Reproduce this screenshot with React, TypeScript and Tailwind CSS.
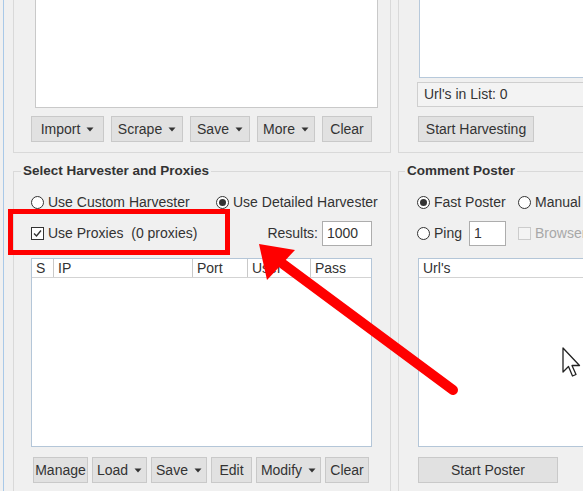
import type { ReactNode } from 'react'

const font = 'font-["Liberation_Sans",Arial,sans-serif]'

function Caret() {
  return (
    <svg width="8" height="5" viewBox="0 0 8 5" className="ml-[6px] shrink-0">
      <path d="M0.5 0.5h7L4 4.5z" fill="#333" />
    </svg>
  )
}

function Btn({ w, children, caret }: { w: number; children: ReactNode; caret?: boolean }) {
  return (
    <div
      className="flex h-[26px] shrink-0 items-center justify-center border border-[#c9c9c9] bg-[#e1e1e1] text-[14px] text-[#333]"
      style={{ width: w }}
    >
      {children}
      {caret ? <Caret /> : null}
    </div>
  )
}

function Radio({ on }: { on?: boolean }) {
  return (
    <span className="flex h-[13px] w-[13px] shrink-0 items-center justify-center rounded-full border border-[#333] bg-white">
      {on ? <span className="h-[7px] w-[7px] rounded-full bg-[#333]" /> : null}
    </span>
  )
}

function Check({ on, disabled }: { on?: boolean; disabled?: boolean }) {
  return (
    <span
      className={
        disabled
          ? 'block h-[13px] w-[13px] shrink-0 border border-[#cccccc] bg-[#f4f4f4]'
          : 'flex h-[13px] w-[13px] shrink-0 items-center justify-center border border-[#333] bg-white'
      }
    >
      {on ? (
        <svg width="11" height="11" viewBox="0 0 11 11">
          <path d="M2 5.5l2.5 2.5L9 2.5" fill="none" stroke="#333" strokeWidth="1.4" />
        </svg>
      ) : null}
    </span>
  )
}

const proxyCols = [
  { label: 'S', w: 22 },
  { label: 'IP', w: 139 },
  { label: 'Port', w: 55 },
  { label: 'User', w: 63 },
  { label: 'Pass', w: 61 },
]

export default function App() {
  return (
    <div className={`relative flex h-[491px] w-[583px] overflow-hidden bg-[#f0f0f0] text-[14px] text-[#333] ${font}`}>
      <div className="ml-[3px] w-px shrink-0 bg-[#a9c9e8]" />

      <div className="flex shrink-0 flex-col pl-[9px]">
        {/* top panels */}
        <div className="flex h-[153px] shrink-0 gap-[7px]">
          <div className="w-[378px] shrink-0 border-x border-b border-[#d9d9d9]">
            <div className="ml-[21px] h-[108px] w-[343px] border-x border-b border-[#c9c9c9] bg-white" />
            <div className="ml-[17px] mt-[8px] flex gap-[7px]">
              <Btn w={73} caret>Import</Btn>
              <Btn w={72} caret>Scrape</Btn>
              <Btn w={60} caret>Save</Btn>
              <Btn w={58} caret>More</Btn>
              <Btn w={50}>Clear</Btn>
            </div>
          </div>

          <div className="w-[210px] shrink-0 border-l border-b border-[#d9d9d9]">
            <div className="ml-[20px] h-[78px] border-l border-b border-[#b7c9db] bg-white" />
            <div className="ml-[18px] mt-[4px] flex h-[25px] items-center border border-[#cfcfcf] bg-[#f3f3f3] pl-[6px]">
              Url's in List: 0
            </div>
            <div className="ml-[19px] mt-[9px]">
              <Btn w={116}>Start Harvesting</Btn>
            </div>
          </div>
        </div>

        {/* bottom panels */}
        <div className="mt-[10px] flex shrink-0 gap-[7px]">
          <fieldset className="w-[378px] shrink-0 border border-[#d9d9d9] p-0 pb-[20px]">
            <legend className="ml-[7px] px-[2px] text-[13.5px] font-bold leading-[16px]">
              Select Harvester and Proxies
            </legend>
            <div className="ml-[17px] mt-[15px] flex h-[16px] items-center">
              <div className="flex w-[185px] items-center gap-[4px]">
                <Radio />
                <span>Use Custom Harvester</span>
              </div>
              <div className="flex items-center gap-[4px]">
                <Radio on />
                <span>Use Detailed Harvester</span>
              </div>
            </div>
            <div className="ml-[17px] mt-[11px] flex h-[25px] w-[341px] items-center">
              <Check on />
              <span className="ml-[4px] whitespace-pre">Use Proxies  (0 proxies)</span>
              <span className="ml-auto">Results:</span>
              <div className="ml-[4px] flex h-[25px] w-[50px] items-center border border-[#adadad] bg-white pl-[4px]">
                1000
              </div>
            </div>
            <div className="ml-[17px] mt-[12px] flex h-[189px] w-[341px] flex-col border border-[#b4c6d8] bg-white">
              <div className="flex h-[19px] border-b border-[#d3d3d3]">
                {proxyCols.map((c, i) => (
                  <div
                    key={c.label}
                    className={
                      i < proxyCols.length - 1
                        ? 'flex items-center border-r border-[#c9c9c9] pl-[4px]'
                        : 'flex flex-1 items-center pl-[4px]'
                    }
                    style={i < proxyCols.length - 1 ? { width: c.w } : undefined}
                  >
                    {c.label}
                  </div>
                ))}
              </div>
            </div>
            <div className="ml-[19px] mt-[10px] flex gap-[4px]">
              <Btn w={55}>Manage</Btn>
              <Btn w={55} caret>Load</Btn>
              <Btn w={56} caret>Save</Btn>
              <Btn w={41}>Edit</Btn>
              <Btn w={65} caret>Modify</Btn>
              <Btn w={44}>Clear</Btn>
            </div>
          </fieldset>

          <fieldset className="w-[210px] shrink-0 border border-[#d9d9d9] p-0 pb-[20px]">
            <legend className="ml-[6px] px-[2px] text-[13.5px] font-bold leading-[16px]">Comment Poster</legend>
            <div className="ml-[18px] mt-[15px] flex h-[16px] items-center">
              <div className="flex w-[101px] items-center gap-[4px]">
                <Radio on />
                <span>Fast Poster</span>
              </div>
              <div className="flex items-center gap-[4px] whitespace-nowrap">
                <Radio />
                <span>Manual</span>
              </div>
            </div>
            <div className="ml-[18px] mt-[11px] flex h-[25px] items-center whitespace-nowrap">
              <Radio />
              <span className="ml-[4px]">Ping</span>
              <div className="ml-[7px] flex h-[25px] w-[37px] shrink-0 items-center border border-[#adadad] bg-white pl-[4px]">
                1
              </div>
              <span className="ml-[12px]">
                <Check disabled />
              </span>
              <span className="ml-[4px] text-[#a8a8a8]">Browser</span>
            </div>
            <div className="ml-[19px] mt-[12px] flex h-[189px] flex-col border border-[#b4c6d8] bg-white">
              <div className="flex h-[19px] items-center border-b border-[#d3d3d3] pl-[4px]">Url's</div>
            </div>
            <div className="ml-[19px] mt-[10px]">
              <Btn w={140}>Start Poster</Btn>
            </div>
          </fieldset>
        </div>
      </div>

      {/* annotation overlay */}
      <div className="pointer-events-none absolute left-[8px] top-[209px] h-[46px] w-[222px] border-[5px] border-[#ff0000]" />
      <svg className="pointer-events-none absolute left-0 top-0" width="583" height="491" viewBox="0 0 583 491">
        <line x1="453" y1="390" x2="283" y2="264" stroke="#ff0000" strokeWidth="10" strokeLinecap="round" />
        <polygon points="259,244 295,250 267,280" fill="#ff0000" />
      </svg>
      <svg className="pointer-events-none absolute left-[562px] top-[347px]" width="20" height="31" viewBox="0 0 20 31">
        <path
          d="M1 1 L1 25 L6.5 19.5 L10.5 29 L14 27.5 L10 18.5 L17.5 18.5 Z"
          fill="#fff"
          stroke="#222"
          strokeWidth="1.3"
          strokeLinejoin="round"
        />
      </svg>
    </div>
  )
}
